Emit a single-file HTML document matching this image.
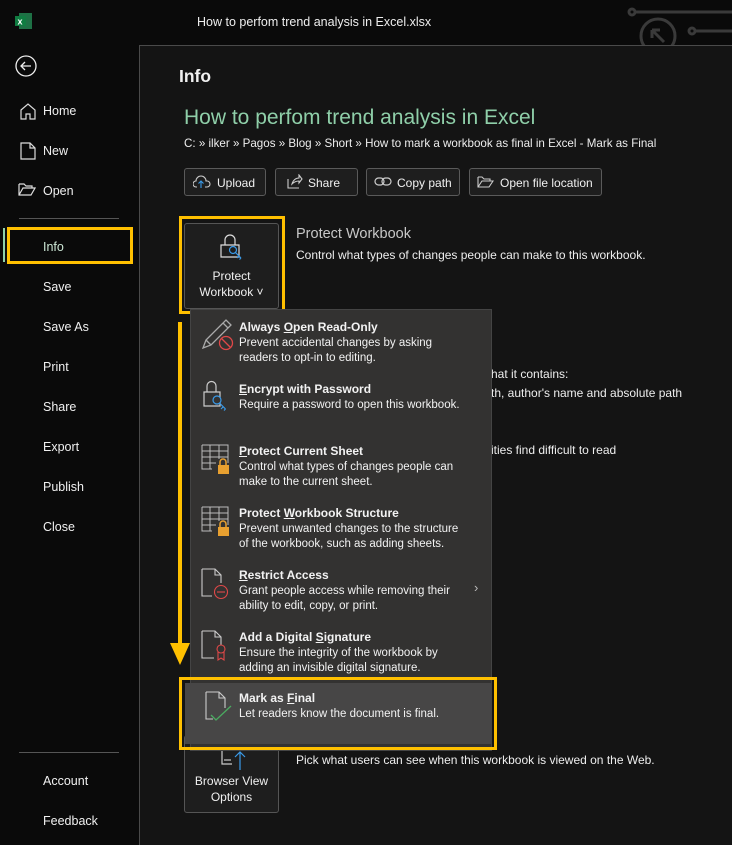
<!DOCTYPE html>
<html><head><meta charset="utf-8">
<style>
*{margin:0;padding:0;box-sizing:border-box}
body{width:732px;height:826px;background:#0a0a0a;font-family:"Liberation Sans",sans-serif;color:#fff;position:relative;overflow:hidden;font-size:12px}
.a{position:absolute;white-space:nowrap}
.main{position:absolute;left:139px;top:45px;width:600px;height:800px;background:#141414;border-left:1px solid #4a4a4a;border-top:1px solid #4a4a4a}
.nav{position:absolute;left:43px;font-size:12.5px;color:#f0f0f0}
.btn{position:absolute;top:168px;height:28px;border:1px solid #5a5a5a;border-radius:3px;background:#1e1e1e;font-size:12px;padding:7px 0 0 32px;color:#f0f0f0;white-space:nowrap;overflow:hidden}
.menu{position:absolute;left:190px;top:309px;width:302px;height:442px;background:#333231;border:1px solid #444}
.it{position:absolute;left:48px;font-size:11.5px;line-height:15.5px;color:#f2f2f2;white-space:nowrap}
.it b{display:block;font-size:12px}
.ic{position:absolute;left:10px}
</style></head><body>
<svg class="a" style="left:15px;top:12px" width="18" height="18"><rect x="4" y="1" width="13" height="16" fill="#1e7145"/><rect x="0" y="4" width="11" height="10" fill="#107c41"/><text x="2.5" y="12.5" font-size="9" font-weight="bold" fill="#fff" font-family="Liberation Sans">x</text></svg>
<div class="a" style="left:197px;top:15px;font-size:12.5px;color:#eee">How to perfom trend analysis in Excel.xlsx</div>
<svg class="a" style="left:620px;top:0" width="112" height="45" fill="none" stroke="#3a3a3a" stroke-width="3"><circle cx="12" cy="12" r="3"/><line x1="15" y1="12" x2="112" y2="12"/><circle cx="38" cy="36" r="17"/><path d="M32 30 L44 42 M32 30 h8 M32 30 v8"/><circle cx="72" cy="31" r="3"/><line x1="75" y1="31" x2="112" y2="31"/></svg>
<svg class="a" style="left:15px;top:55px" width="24" height="24" fill="none" stroke="#eee" stroke-width="1.3"><circle cx="11" cy="11" r="10"/><path d="M16 11H6M10 7l-4 4 4 4"/></svg>
<svg class="a" style="left:19px;top:102px" width="18" height="18" fill="none" stroke="#ddd" stroke-width="1.2"><path d="M2 8L9 2l7 6v9h-5v-5H7v5H2z"/></svg>
<svg class="a" style="left:20px;top:142px" width="16" height="18" fill="none" stroke="#ddd" stroke-width="1.2"><path d="M1 1h9l5 5v11H1zM10 1v5h5"/></svg>
<svg class="a" style="left:18px;top:183px" width="18" height="14" fill="none" stroke="#ddd" stroke-width="1.2"><path d="M1 1h5l2 2h6v2M1 1v11h12l4-7H5L1 12"/></svg>
<div class="nav" style="top:104px">Home</div>
<div class="nav" style="top:144px">New</div>
<div class="nav" style="top:184px">Open</div>
<div class="a" style="left:19px;top:218px;width:100px;height:1px;background:#555"></div>
<div class="a" style="left:3px;top:228px;width:2px;height:34px;background:#8fd0a8"></div>
<div class="a" style="left:7px;top:227px;width:126px;height:37px;border:3px solid #ffc000"></div>
<div class="nav" style="top:240px;color:#cde8d6">Info</div>
<div class="nav" style="top:280px">Save</div>
<div class="nav" style="top:320px">Save As</div>
<div class="nav" style="top:360px">Print</div>
<div class="nav" style="top:400px">Share</div>
<div class="nav" style="top:440px">Export</div>
<div class="nav" style="top:480px">Publish</div>
<div class="nav" style="top:520px">Close</div>
<div class="a" style="left:19px;top:752px;width:100px;height:1px;background:#555"></div>
<div class="nav" style="top:774px">Account</div>
<div class="nav" style="top:814px">Feedback</div>

<div class="main"></div>
<div class="a" style="left:179px;top:66px;font-size:17.5px;font-weight:bold;color:#f0f0f0">Info</div>
<div class="a" style="left:184px;top:106px;font-size:21px;color:#8fcfa9">How to perfom trend analysis in Excel</div>
<div class="a" style="left:184px;top:137px;font-size:11.6px;color:#eee">C: » ilker » Pagos » Blog » Short » How to mark a workbook as final in Excel - Mark as Final</div>
<div class="btn" style="left:184px;width:82px">Upload</div>
<svg class="a" style="left:193px;top:175px" width="18" height="14" fill="none" stroke="#ccc" stroke-width="1.1"><path d="M4 12H3a3 3 0 0 1 0-6 5 5 0 0 1 10 0h1a3 3 0 0 1 0 6h-2"/><path d="M8 13V6M5.5 8.5 8 6l2.5 2.5" stroke="#3a9ae8"/></svg>
<div class="btn" style="left:275px;width:83px">Share</div>
<svg class="a" style="left:287px;top:174px" width="16" height="15" fill="none" stroke="#ccc" stroke-width="1.1"><path d="M1 5v9h11M5 10c1-4 4-6 7-6V1l3 4-3 4V7c-3 0-5 1-7 3z"/></svg>
<div class="btn" style="left:366px;width:94px;padding-left:30px">Copy path</div>
<svg class="a" style="left:374px;top:175px" width="18" height="13" fill="none" stroke="#ccc" stroke-width="1.2"><rect x="1" y="3" width="9" height="7" rx="3.5"/><rect x="8" y="3" width="9" height="7" rx="3.5"/></svg>
<div class="btn" style="left:469px;width:133px;padding-left:30px">Open file location</div>
<svg class="a" style="left:477px;top:176px" width="17" height="12" fill="none" stroke="#ccc" stroke-width="1.1"><path d="M1 1h4l2 2h6v2M1 1v10h11l4-6H5l-4 6"/></svg>

<div class="a" style="left:179px;top:216px;width:106px;height:98px;border:3px solid #ffc000"></div>
<div class="a" style="left:184px;top:223px;width:95px;height:86px;background:#1e1e1e;border:1px solid #555;border-radius:3px"></div>
<svg class="a" style="left:220px;top:234px" width="28" height="30" fill="none" stroke-width="1.2"><path d="M5 11V6a5 5 0 0 1 10 0v5M1 11h18v12H1z" stroke="#ddd"/><circle cx="13" cy="16" r="3.5" fill="#1e1e1e" stroke="#3a9ae8"/><path d="M15 18l6 6M19 22l-2 2M21 24l-1.5 1.5" stroke="#3a9ae8"/></svg>
<div class="a" style="left:184px;top:268px;width:95px;text-align:center;font-size:12px;line-height:16px;color:#f0f0f0">Protect<br>Workbook ˅</div>
<div class="a" style="left:296px;top:226px;font-size:14.5px;color:#c8c8c8">Protect Workbook</div>
<div class="a" style="left:296px;top:248px;font-size:12px;color:#eee">Control what types of changes people can make to this workbook.</div>
<div class="a" style="left:491px;top:367px;font-size:12px;color:#eee">hat it contains:</div>
<div class="a" style="left:491px;top:386px;font-size:12px;color:#eee">th, author's name and absolute path</div>
<div class="a" style="left:491px;top:443px;font-size:12px;color:#eee">ities find difficult to read</div>

<div class="a" style="left:184px;top:735px;width:95px;height:78px;background:#1e1e1e;border:1px solid #555;border-radius:3px"></div>
<svg class="a" style="left:220px;top:746px" width="28" height="25" fill="none" stroke-width="1.2"><path d="M2 0v18h10" stroke="#ccc"/><path d="M4 14h7" stroke="#ccc"/><path d="M20 24V6M15 11l5-5 5 5" stroke="#3a9ae8"/></svg>
<div class="a" style="left:184px;top:773px;width:95px;text-align:center;font-size:12px;line-height:16px;color:#f0f0f0">Browser View<br>Options</div>
<div class="a" style="left:296px;top:753px;font-size:12px;color:#eee">Pick what users can see when this workbook is viewed on the Web.</div>

<div class="menu">
 <svg class="ic" style="top:8px" width="34" height="34" fill="none" stroke-width="1.3"><path d="M2 30l3-8L25 2l5 5-20 20z M5 22l5 5 M22 5l5 5" stroke="#aaa"/><circle cx="25" cy="25" r="6.5" stroke="#e04848"/><path d="M20.5 20.5l9 9" stroke="#e04848"/></svg>
 <div class="it" style="top:10px"><b>Always <u>O</u>pen Read-Only</b>Prevent accidental changes by asking<br>readers to opt-in to editing.</div>
 <svg class="ic" style="top:70px" width="34" height="34" fill="none" stroke-width="1.2"><path d="M6 12V6a4.5 4.5 0 0 1 9 0v6M3 12h16v14H3z" stroke="#ccc"/><circle cx="16" cy="20" r="4" fill="#333231" stroke="#3a9ae8"/><path d="M18.5 23l6 6M22 27l-2 2M24.5 29l-1.5 1.5" stroke="#3a9ae8"/></svg>
 <div class="it" style="top:72px"><b><u>E</u>ncrypt with Password</b>Require a password to open this workbook.</div>
 <svg class="ic" style="top:134px" width="34" height="34" fill="none" stroke="#bbb" stroke-width="1"><path d="M1 1h26v18M1 1v24h10M1 7h26M1 13h26M1 19h14M9 1v24M18 1v14"/><path d="M19 21v-3a3 3 0 0 1 6 0v3" stroke="#e8a030" stroke-width="1.5"/><rect x="17" y="21" width="11" height="9" fill="#e8a030" stroke="none"/></svg>
 <div class="it" style="top:134px"><b><u>P</u>rotect Current Sheet</b>Control what types of changes people can<br>make to the current sheet.</div>
 <svg class="ic" style="top:196px" width="34" height="34" fill="none" stroke="#bbb" stroke-width="1"><path d="M1 1h26v18M1 1v24h10M1 7h26M1 13h26M1 19h14M9 1v24M18 1v14"/><path d="M19 21v-3a3 3 0 0 1 6 0v3" stroke="#e8a030" stroke-width="1.5"/><rect x="17" y="21" width="11" height="9" fill="#e8a030" stroke="none"/></svg>
 <div class="it" style="top:196px"><b>Protect <u>W</u>orkbook Structure</b>Prevent unwanted changes to the structure<br>of the workbook, such as adding sheets.</div>
 <svg class="ic" style="top:258px" width="34" height="34" fill="none" stroke-width="1.1"><path d="M1 1h13l6 6v8M1 1v27h10M14 1v6h6" stroke="#ccc"/><circle cx="20" cy="24" r="6.5" stroke="#e04848"/><path d="M16 24h8" stroke="#e04848"/></svg>
 <div class="it" style="top:258px"><b><u>R</u>estrict Access</b>Grant people access while removing their<br>ability to edit, copy, or print.</div>
 <div class="a" style="left:283px;top:270px;color:#bbb;font-size:13px">›</div>
 <svg class="ic" style="top:320px" width="34" height="34" fill="none" stroke-width="1.1"><path d="M1 1h13l6 6v8M1 1v27h12M14 1v6h6" stroke="#ccc"/><circle cx="20" cy="19" r="4" stroke="#e04848"/><path d="M17 22v8l3-2 3 2v-8" stroke="#e04848"/></svg>
 <div class="it" style="top:320px"><b>Add a Digital <u>S</u>ignature</b>Ensure the integrity of the workbook by<br>adding an invisible digital signature.</div>
</div>
<div class="a" style="left:179px;top:677px;width:318px;height:73px;border:3px solid #ffc000"></div>
<div class="a" style="left:185px;top:683px;width:306px;height:61px;background:#474646"></div>
<svg class="a" style="left:205px;top:691px" width="34" height="34" fill="none" stroke-width="1.1"><path d="M1 1h13l6 6v10M1 1v27h7M14 1v6h6" stroke="#ccc"/><path d="M6 24l5 5 15-14" stroke="#4aaa60" stroke-width="1.3"/></svg>
<div class="it a" style="left:239px;top:691px"><b>Mark as <u>F</u>inal</b>Let readers know the document is final.</div>

<div class="a" style="left:178px;top:322px;width:4px;height:324px;background:#ffc000"></div>
<div class="a" style="left:170px;top:643px;width:0;height:0;border-left:10px solid transparent;border-right:10px solid transparent;border-top:22px solid #ffc000"></div>
</body></html>
